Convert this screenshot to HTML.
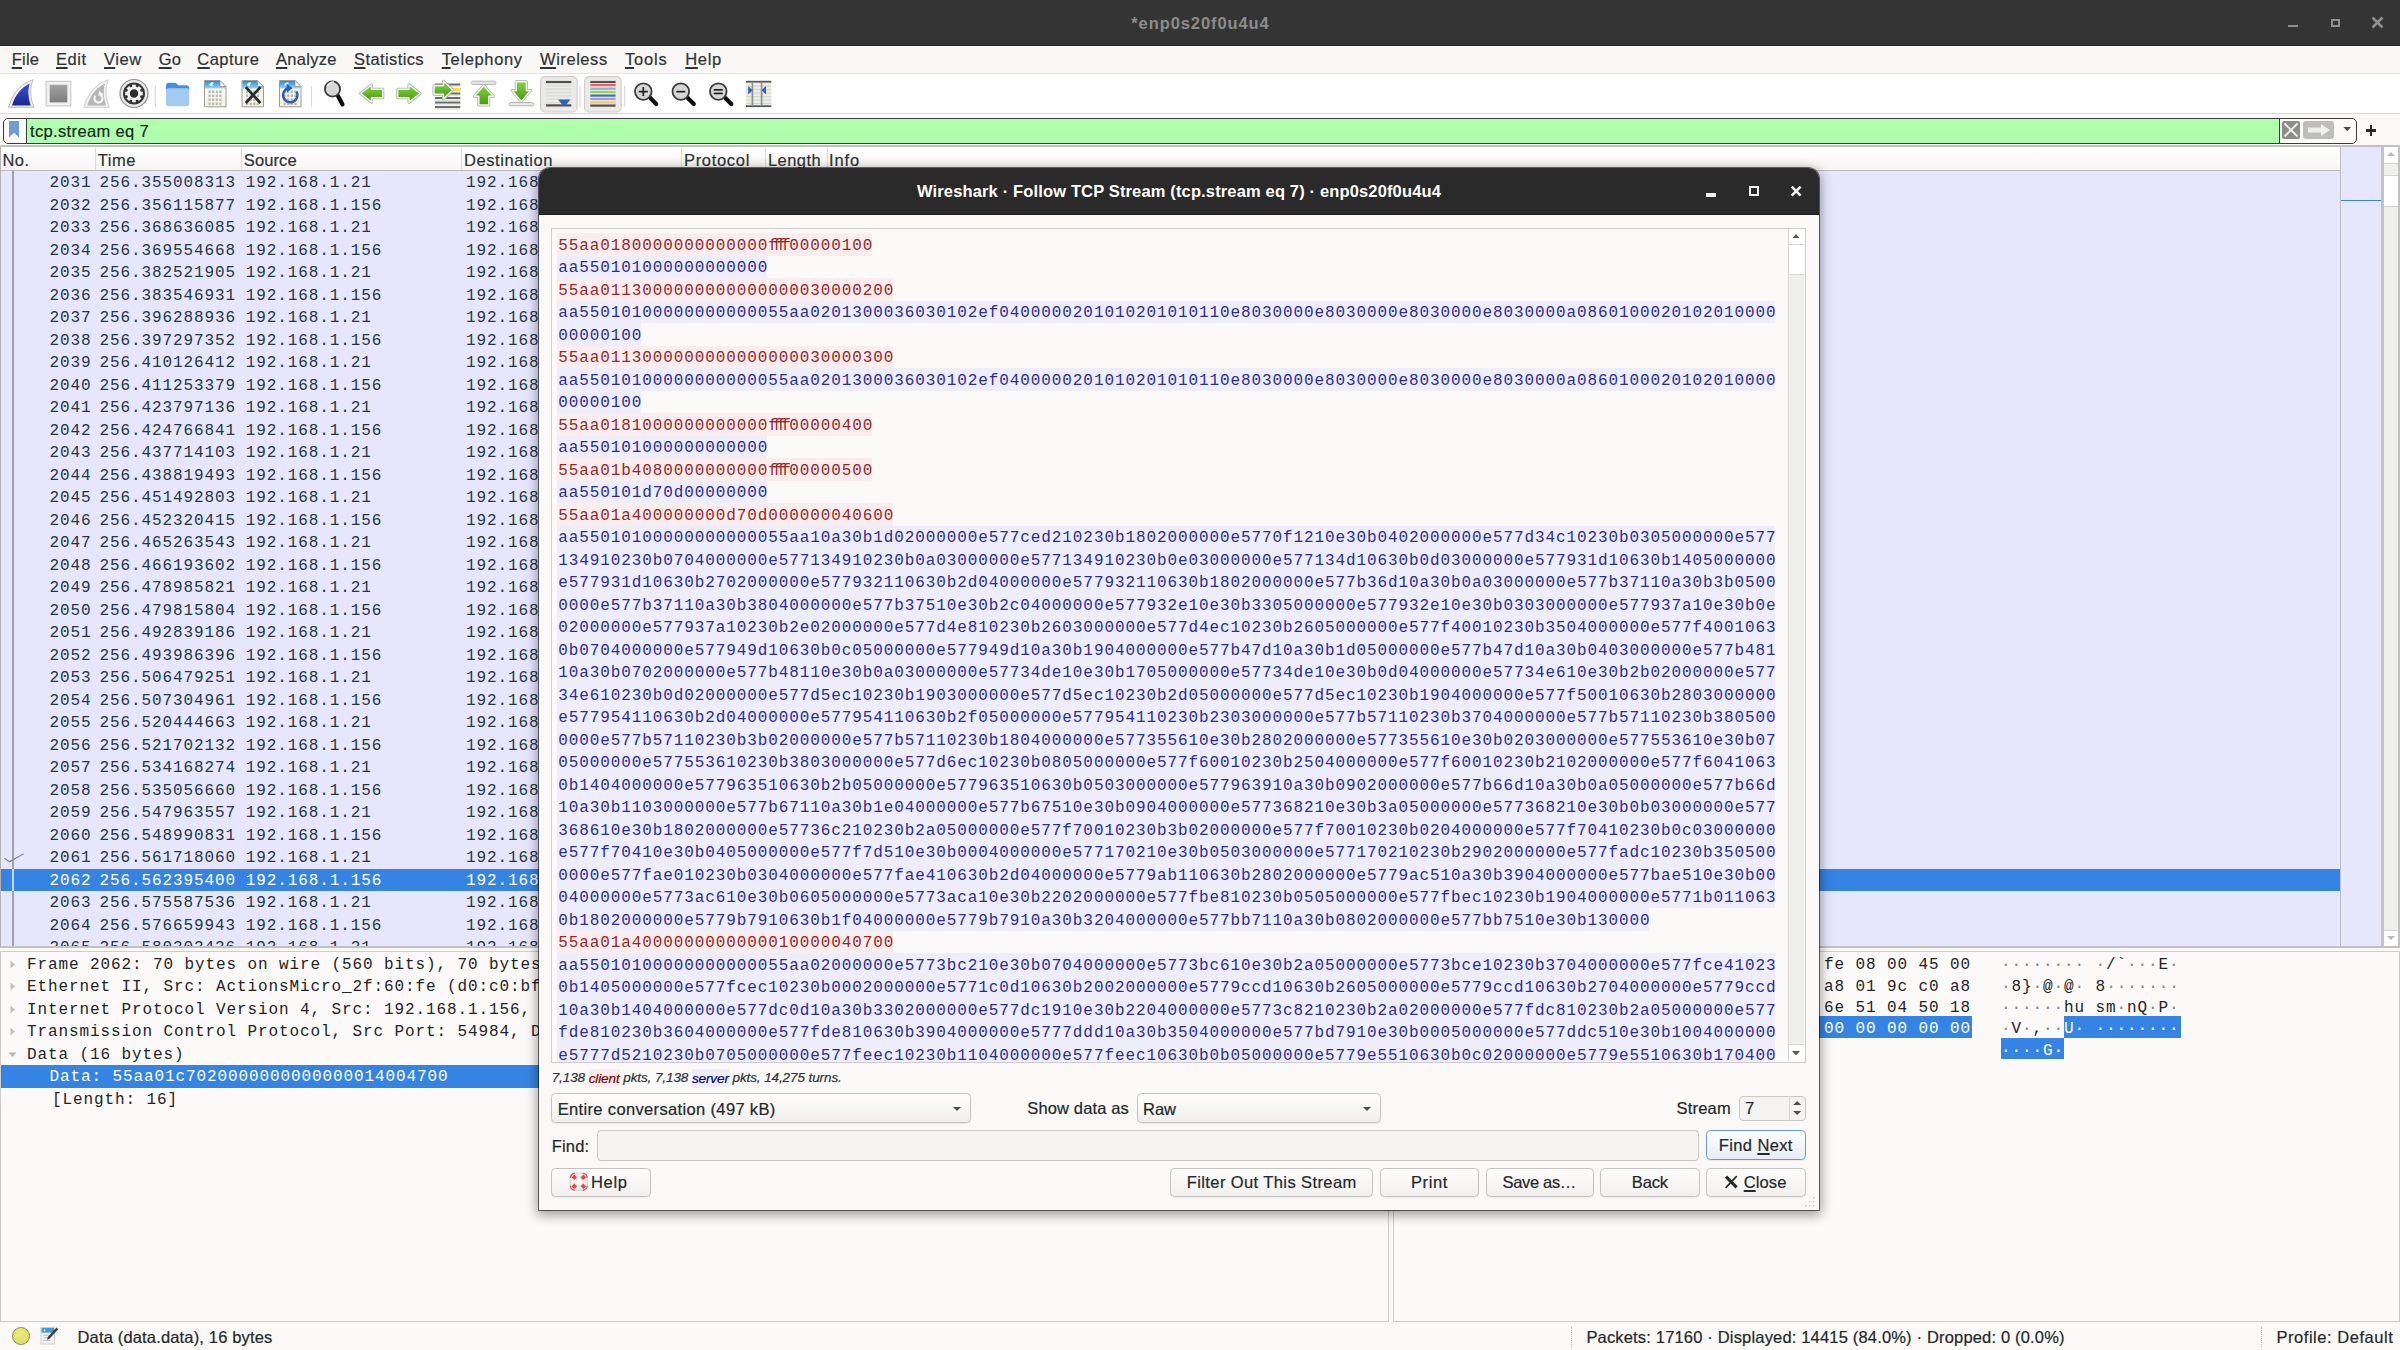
<!DOCTYPE html>
<html><head><meta charset="utf-8"><title>Wireshark</title>
<style>
html,body{margin:0;padding:0;}
body{width:2400px;height:1350px;overflow:hidden;position:relative;background:#faf9f8;font-family:"Liberation Sans","DejaVu Sans",sans-serif;color:#2e3436;}
div,span,svg{position:absolute;box-sizing:border-box;}
span{position:static;}
.t{white-space:pre;-webkit-text-stroke:0.22px currentColor;}
.m{font-family:"Liberation Mono","DejaVu Sans Mono",monospace;font-size:16px;letter-spacing:0.9px;white-space:pre;}
.m>div,.m>span{margin-top:1.7px;}
.hx>div{margin-top:3.1px;}
.d{color:#85888a;}
.row{left:0;height:22.5px;line-height:22.5px;}
.btn{border:1.2px solid #c6c2bd;border-radius:4.5px;background:linear-gradient(#fdfdfc,#f1f0ee);box-shadow:0 1px 1px rgba(0,0,0,0.06);}
.u{text-decoration:underline;text-underline-offset:2px;text-decoration-thickness:1.5px;}
.ff{letter-spacing:-5.3px;margin-right:3.8px;}
</style></head><body>

<div style="left:0;top:0;width:2400px;height:45.8px;background:#343434;border-bottom:1px solid #1e1e1e;"></div>
<div class="t" style="left:1131.3px;top:7.600000000000001px;height:30px;line-height:30px;font-family:'Liberation Sans', 'DejaVu Sans', sans-serif;font-size:16.5px;font-weight:bold;font-style:normal;letter-spacing:0.903px;color:#8d8c8a;-webkit-text-stroke:0;">*enp0s20f0u4u4</div>
<div style="left:2287.7px;top:24.5px;width:10px;height:2.5px;background:#909090;"></div>
<div style="left:2331px;top:18.8px;width:8.5px;height:8.5px;border:2.4px solid #909090;"></div>
<svg style="left:2371px;top:16px" width="13" height="13" viewBox="0 0 13 13"><path d="M1.5 1.5L11.5 11.5M11.5 1.5L1.5 11.5" stroke="#909090" stroke-width="2.6" fill="none"/></svg>
<div style="left:0;top:45.8px;width:2400px;height:27.9px;background:#f9f8f7;border-bottom:1.4px solid #e6e4e2;"></div>
<div class="t" style="left:11.7px;top:44.0px;height:30px;line-height:30px;font-family:'Liberation Sans', 'DejaVu Sans', sans-serif;font-size:16.5px;font-weight:normal;font-style:normal;letter-spacing:0.252px;color:#2e3436;"><span class="u">F</span>ile</div>
<div class="t" style="left:56px;top:44.0px;height:30px;line-height:30px;font-family:'Liberation Sans', 'DejaVu Sans', sans-serif;font-size:16.5px;font-weight:normal;font-style:normal;letter-spacing:0.566px;color:#2e3436;"><span class="u">E</span>dit</div>
<div class="t" style="left:104px;top:44.0px;height:30px;line-height:30px;font-family:'Liberation Sans', 'DejaVu Sans', sans-serif;font-size:16.5px;font-weight:normal;font-style:normal;letter-spacing:0.558px;color:#2e3436;"><span class="u">V</span>iew</div>
<div class="t" style="left:158.7px;top:44.0px;height:30px;line-height:30px;font-family:'Liberation Sans', 'DejaVu Sans', sans-serif;font-size:16.5px;font-weight:normal;font-style:normal;letter-spacing:0.142px;color:#2e3436;"><span class="u">G</span>o</div>
<div class="t" style="left:197.3px;top:44.0px;height:30px;line-height:30px;font-family:'Liberation Sans', 'DejaVu Sans', sans-serif;font-size:16.5px;font-weight:normal;font-style:normal;letter-spacing:0.471px;color:#2e3436;"><span class="u">C</span>apture</div>
<div class="t" style="left:276px;top:44.0px;height:30px;line-height:30px;font-family:'Liberation Sans', 'DejaVu Sans', sans-serif;font-size:16.5px;font-weight:normal;font-style:normal;letter-spacing:0.285px;color:#2e3436;"><span class="u">A</span>nalyze</div>
<div class="t" style="left:354px;top:44.0px;height:30px;line-height:30px;font-family:'Liberation Sans', 'DejaVu Sans', sans-serif;font-size:16.5px;font-weight:normal;font-style:normal;letter-spacing:0.397px;color:#2e3436;"><span class="u">S</span>tatistics</div>
<div class="t" style="left:441.7px;top:44.0px;height:30px;line-height:30px;font-family:'Liberation Sans', 'DejaVu Sans', sans-serif;font-size:16.5px;font-weight:normal;font-style:normal;letter-spacing:0.641px;color:#2e3436;"><span class="u">T</span>elephony</div>
<div class="t" style="left:540px;top:44.0px;height:30px;line-height:30px;font-family:'Liberation Sans', 'DejaVu Sans', sans-serif;font-size:16.5px;font-weight:normal;font-style:normal;letter-spacing:0.554px;color:#2e3436;"><span class="u">W</span>ireless</div>
<div class="t" style="left:625px;top:44.0px;height:30px;line-height:30px;font-family:'Liberation Sans', 'DejaVu Sans', sans-serif;font-size:16.5px;font-weight:normal;font-style:normal;letter-spacing:0.834px;color:#2e3436;"><span class="u">T</span>ools</div>
<div class="t" style="left:685.3px;top:44.0px;height:30px;line-height:30px;font-family:'Liberation Sans', 'DejaVu Sans', sans-serif;font-size:16.5px;font-weight:normal;font-style:normal;letter-spacing:0.616px;color:#2e3436;"><span class="u">H</span>elp</div>
<div style="left:0;top:74px;width:2400px;height:40px;background:#ffffff;border-bottom:1.5px solid #d9d7d4;"></div>
<svg style="left:0;top:74px" width="800" height="40" viewBox="0 0 800 40">
<defs>
<linearGradient id="gb" x1="0" y1="0" x2="0" y2="1"><stop offset="0" stop-color="#3d52cf"/><stop offset="1" stop-color="#1a2794"/></linearGradient>
<linearGradient id="gg" x1="0" y1="0" x2="0" y2="1"><stop offset="0" stop-color="#86d145"/><stop offset="1" stop-color="#489a0e"/></linearGradient>
<linearGradient id="gs" x1="0" y1="0" x2="0" y2="1"><stop offset="0" stop-color="#a3a3a3"/><stop offset="1" stop-color="#7c7c7c"/></linearGradient>
<linearGradient id="gp" x1="0" y1="0" x2="0" y2="1"><stop offset="0" stop-color="#ffffff"/><stop offset="1" stop-color="#f3f3dc"/></linearGradient>
<linearGradient id="gsk" x1="0" y1="0" x2="0" y2="1"><stop offset="0" stop-color="#1d8fe0"/><stop offset="1" stop-color="#9ed2f2"/></linearGradient>
</defs>
<rect x="154.70000000000002" y="12" width="1.2" height="21" fill="#dedcd9"/>
<rect x="310.9" y="12" width="1.2" height="21" fill="#dedcd9"/>
<rect x="579.4" y="12" width="1.2" height="21" fill="#dedcd9"/>
<rect x="624.1" y="12" width="1.2" height="21" fill="#dedcd9"/>
<path d="M8.5,33.3 C12,21 20,9.5 33,5.8 C29.5,14 30,24 34,33.3 Z" fill="#f1f1f1" stroke="#b9b9b9" stroke-width="1"/>
<path d="M12,31.6 C15,21.5 21,13.5 29.8,9.6 C27.5,16 28.3,24 30.8,31.6 Z" fill="url(#gb)"/>
<rect x="46.2" y="7.3" width="24.6" height="24.6" fill="#f2f2f2" stroke="#c4c4c4" stroke-width="1"/>
<rect x="49.7" y="10.8" width="17.6" height="17.6" fill="url(#gs)"/>
<path d="M83.8,33.3 C87.3,21 95.3,9.5 108.3,5.8 C104.8,14 105.3,24 109.3,33.3 Z" fill="#f1f1f1" stroke="#cfcfcf" stroke-width="1"/>
<path d="M87.3,31.6 C90.3,21.5 96.3,13.5 105.1,9.6 C102.8,16 103.6,24 106.1,31.6 Z" fill="#b7b7b7"/>
<circle cx="98.5" cy="24.5" r="4" fill="none" stroke="#f4f4f4" stroke-width="2.2" stroke-dasharray="19 7" transform="rotate(-60 98.5 24.5)"/>
<path d="M99.5,16.5 L103.8,20.8 L98,21.8 Z" fill="#f4f4f4"/>
<circle cx="134" cy="19.5" r="14" fill="#e9e9e9" stroke="#8f8f8f" stroke-width="1.2"/>
<circle cx="134" cy="19.5" r="11" fill="#353535"/>
<rect x="132.2" y="10.7" width="3.6" height="4" fill="#f2f2f2" transform="rotate(0 134 19.5)"/>
<rect x="132.2" y="10.7" width="3.6" height="4" fill="#f2f2f2" transform="rotate(45 134 19.5)"/>
<rect x="132.2" y="10.7" width="3.6" height="4" fill="#f2f2f2" transform="rotate(90 134 19.5)"/>
<rect x="132.2" y="10.7" width="3.6" height="4" fill="#f2f2f2" transform="rotate(135 134 19.5)"/>
<rect x="132.2" y="10.7" width="3.6" height="4" fill="#f2f2f2" transform="rotate(180 134 19.5)"/>
<rect x="132.2" y="10.7" width="3.6" height="4" fill="#f2f2f2" transform="rotate(225 134 19.5)"/>
<rect x="132.2" y="10.7" width="3.6" height="4" fill="#f2f2f2" transform="rotate(270 134 19.5)"/>
<rect x="132.2" y="10.7" width="3.6" height="4" fill="#f2f2f2" transform="rotate(315 134 19.5)"/>
<circle cx="134" cy="19.5" r="5.6" fill="none" stroke="#f2f2f2" stroke-width="2.6"/>
<circle cx="134" cy="19.5" r="3.6" fill="#2c2c2c"/>
<path d="M166,16 V12 q0,-3.2 3,-3.2 h5.5 q1.5,0 2.5,1.2 l1.2,1.3 h8 q3,0 3,3 V16 Z" fill="#438de6"/>
<rect x="166" y="14.2" width="23.3" height="18" rx="2.6" fill="#a4caee"/>
<path d="M204.5,6.5 H220 L226,12.5 V32.8 H204.5 Z" fill="url(#gp)" stroke="#9b9b9b" stroke-width="1"/>
<path d="M205,7 H219.8 L225.5,12.7 V14.5 H205 Z" fill="url(#gsk)"/>
<path d="M220,6.5 V12.5 H226 Z" fill="#f4f4f4" stroke="#9b9b9b" stroke-width="0.8"/>
<path d="M209,11 q2,-4 5,-2 q-2,1 -1.5,3.5 q-2,-1 -3.5,-1.5z" fill="#ffffff" opacity="0.9"/>
<rect x="208.5" y="16.5" width="2.2" height="2.6" fill="#b9b9b4"/>
<rect x="212.1" y="16.5" width="2.2" height="2.6" fill="#b9b9b4"/>
<rect x="215.7" y="16.5" width="2.2" height="2.6" fill="#b9b9b4"/>
<rect x="219.3" y="16.5" width="2.2" height="2.6" fill="#b9b9b4"/>
<rect x="208.5" y="20.5" width="2.2" height="2.6" fill="#b9b9b4"/>
<rect x="212.1" y="20.5" width="2.2" height="2.6" fill="#b9b9b4"/>
<rect x="215.7" y="20.5" width="2.2" height="2.6" fill="#b9b9b4"/>
<rect x="219.3" y="20.5" width="2.2" height="2.6" fill="#b9b9b4"/>
<rect x="208.5" y="24.5" width="2.2" height="2.6" fill="#b9b9b4"/>
<rect x="212.1" y="24.5" width="2.2" height="2.6" fill="#b9b9b4"/>
<rect x="215.7" y="24.5" width="2.2" height="2.6" fill="#b9b9b4"/>
<rect x="219.3" y="24.5" width="2.2" height="2.6" fill="#b9b9b4"/>
<rect x="208.5" y="28.5" width="2.2" height="2.6" fill="#b9b9b4"/>
<rect x="212.1" y="28.5" width="2.2" height="2.6" fill="#b9b9b4"/>
<rect x="215.7" y="28.5" width="2.2" height="2.6" fill="#b9b9b4"/>
<rect x="219.3" y="28.5" width="2.2" height="2.6" fill="#b9b9b4"/>
<path d="M242.0,6.5 H257.5 L263.5,12.5 V32.8 H242.0 Z" fill="url(#gp)" stroke="#9b9b9b" stroke-width="1"/>
<path d="M242.5,7 H257.3 L263.0,12.7 V14.5 H242.5 Z" fill="url(#gsk)"/>
<path d="M257.5,6.5 V12.5 H263.5 Z" fill="#f4f4f4" stroke="#9b9b9b" stroke-width="0.8"/>
<path d="M246.5,11 q2,-4 5,-2 q-2,1 -1.5,3.5 q-2,-1 -3.5,-1.5z" fill="#ffffff" opacity="0.9"/>
<rect x="246.0" y="16.5" width="2.2" height="2.6" fill="#b9b9b4"/>
<rect x="249.6" y="16.5" width="2.2" height="2.6" fill="#b9b9b4"/>
<rect x="253.2" y="16.5" width="2.2" height="2.6" fill="#b9b9b4"/>
<rect x="256.8" y="16.5" width="2.2" height="2.6" fill="#b9b9b4"/>
<rect x="246.0" y="20.5" width="2.2" height="2.6" fill="#b9b9b4"/>
<rect x="249.6" y="20.5" width="2.2" height="2.6" fill="#b9b9b4"/>
<rect x="253.2" y="20.5" width="2.2" height="2.6" fill="#b9b9b4"/>
<rect x="256.8" y="20.5" width="2.2" height="2.6" fill="#b9b9b4"/>
<rect x="246.0" y="24.5" width="2.2" height="2.6" fill="#b9b9b4"/>
<rect x="249.6" y="24.5" width="2.2" height="2.6" fill="#b9b9b4"/>
<rect x="253.2" y="24.5" width="2.2" height="2.6" fill="#b9b9b4"/>
<rect x="256.8" y="24.5" width="2.2" height="2.6" fill="#b9b9b4"/>
<rect x="246.0" y="28.5" width="2.2" height="2.6" fill="#b9b9b4"/>
<rect x="249.6" y="28.5" width="2.2" height="2.6" fill="#b9b9b4"/>
<rect x="253.2" y="28.5" width="2.2" height="2.6" fill="#b9b9b4"/>
<rect x="256.8" y="28.5" width="2.2" height="2.6" fill="#b9b9b4"/>
<path d="M245.8,13.2 L260.4,29 M260.4,13.2 L245.8,29" stroke="#2b2b2b" stroke-width="2.7" fill="none"/>
<path d="M279.5,6.5 H295 L301,12.5 V32.8 H279.5 Z" fill="url(#gp)" stroke="#9b9b9b" stroke-width="1"/>
<path d="M280,7 H294.8 L300.5,12.7 V14.5 H280 Z" fill="url(#gsk)"/>
<path d="M295,6.5 V12.5 H301 Z" fill="#f4f4f4" stroke="#9b9b9b" stroke-width="0.8"/>
<path d="M284,11 q2,-4 5,-2 q-2,1 -1.5,3.5 q-2,-1 -3.5,-1.5z" fill="#ffffff" opacity="0.9"/>
<rect x="283.5" y="16.5" width="2.2" height="2.6" fill="#b9b9b4"/>
<rect x="287.1" y="16.5" width="2.2" height="2.6" fill="#b9b9b4"/>
<rect x="290.7" y="16.5" width="2.2" height="2.6" fill="#b9b9b4"/>
<rect x="294.3" y="16.5" width="2.2" height="2.6" fill="#b9b9b4"/>
<rect x="283.5" y="20.5" width="2.2" height="2.6" fill="#b9b9b4"/>
<rect x="287.1" y="20.5" width="2.2" height="2.6" fill="#b9b9b4"/>
<rect x="290.7" y="20.5" width="2.2" height="2.6" fill="#b9b9b4"/>
<rect x="294.3" y="20.5" width="2.2" height="2.6" fill="#b9b9b4"/>
<rect x="283.5" y="24.5" width="2.2" height="2.6" fill="#b9b9b4"/>
<rect x="287.1" y="24.5" width="2.2" height="2.6" fill="#b9b9b4"/>
<rect x="290.7" y="24.5" width="2.2" height="2.6" fill="#b9b9b4"/>
<rect x="294.3" y="24.5" width="2.2" height="2.6" fill="#b9b9b4"/>
<rect x="283.5" y="28.5" width="2.2" height="2.6" fill="#b9b9b4"/>
<rect x="287.1" y="28.5" width="2.2" height="2.6" fill="#b9b9b4"/>
<rect x="290.7" y="28.5" width="2.2" height="2.6" fill="#b9b9b4"/>
<rect x="294.3" y="28.5" width="2.2" height="2.6" fill="#b9b9b4"/>
<path d="M296.5,17.5 A7.2,7.2 0 1 1 289,14" stroke="#2f5fae" stroke-width="2.6" fill="none"/>
<path d="M286.5,9.5 L292.5,14.2 L286.8,18.5 Z" fill="#2f5fae"/>
<path d="M338,22 L342.5,30.5" stroke="#0d0d0d" stroke-width="4.2" stroke-linecap="round"/>
<circle cx="332.5" cy="15" r="7.6" fill="#d6d6d6" stroke="#3a3a3a" stroke-width="1.8"/>
<path d="M327,12.5 q2,-4.5 7,-4.5" stroke="#ffffff" stroke-width="1.4" fill="none" opacity="0.9"/>
<path d="M360.6,19.5 L371.5,10.8 V15.2 H382.8 V23.8 H371.5 V28.2 Z" fill="none" stroke="#aeaeae" stroke-width="3" stroke-linejoin="round"/>
<path d="M360.6,19.5 L371.5,10.8 V15.2 H382.8 V23.8 H371.5 V28.2 Z" fill="url(#gg)" stroke="#eef3ea" stroke-width="1.5" stroke-linejoin="round"/>
<path d="M420,19.5 L409,10.8 V15.2 H397.7 V23.8 H409 V28.2 Z" fill="none" stroke="#aeaeae" stroke-width="3" stroke-linejoin="round"/>
<path d="M420,19.5 L409,10.8 V15.2 H397.7 V23.8 H409 V28.2 Z" fill="url(#gg)" stroke="#eef3ea" stroke-width="1.5" stroke-linejoin="round"/>
<rect x="435" y="9.5" width="25.3" height="2.2" fill="#6a6d6a"/>
<rect x="435" y="11.7" width="25.3" height="1.6" fill="#e6e7e4"/>
<rect x="435" y="14" width="25.3" height="2.2" fill="#6a6d6a"/>
<rect x="435" y="16.2" width="25.3" height="1.6" fill="#e6e7e4"/>
<rect x="435" y="18.5" width="25.3" height="2.2" fill="#6a6d6a"/>
<rect x="435" y="20.7" width="25.3" height="1.6" fill="#e6e7e4"/>
<rect x="435" y="23" width="25.3" height="2.2" fill="#6a6d6a"/>
<rect x="435" y="25.2" width="25.3" height="1.6" fill="#e6e7e4"/>
<rect x="435" y="27.5" width="25.3" height="2.2" fill="#6a6d6a"/>
<rect x="435" y="29.7" width="25.3" height="1.6" fill="#e6e7e4"/>
<rect x="435" y="32" width="25.3" height="2.2" fill="#6a6d6a"/>
<rect x="435" y="34.2" width="25.3" height="1.6" fill="#e6e7e4"/>
<rect x="451" y="14" width="9.3" height="3.2" fill="#f5e04a"/>
<path d="M452.8,16 L443.5,7.2 V11.8 H434 V20.2 H443.5 V24.8 Z" fill="none" stroke="#aeaeae" stroke-width="3" stroke-linejoin="round"/>
<path d="M452.8,16 L443.5,7.2 V11.8 H434 V20.2 H443.5 V24.8 Z" fill="url(#gg)" stroke="#eef3ea" stroke-width="1.5" stroke-linejoin="round"/>
<rect x="471.5" y="7.2" width="24.4" height="3.2" rx="1.3" fill="#e8e8e8" stroke="#ababab" stroke-width="0.9"/>
<path d="M483.8,11.6 L493.2,22.2 H488.8 V31 H478.8 V22.2 H474.4 Z" fill="none" stroke="#aeaeae" stroke-width="3" stroke-linejoin="round"/>
<path d="M483.8,11.6 L493.2,22.2 H488.8 V31 H478.8 V22.2 H474.4 Z" fill="url(#gg)" stroke="#eef3ea" stroke-width="1.5" stroke-linejoin="round"/>
<rect x="509.3" y="28.6" width="24.4" height="3.2" rx="1.3" fill="#e8e8e8" stroke="#ababab" stroke-width="0.9"/>
<path d="M521.3,27.4 L530.6,16.4 H526.4 V7.8 H516.2 V16.4 H512 Z" fill="none" stroke="#aeaeae" stroke-width="3" stroke-linejoin="round"/>
<path d="M521.3,27.4 L530.6,16.4 H526.4 V7.8 H516.2 V16.4 H512 Z" fill="url(#gg)" stroke="#eef3ea" stroke-width="1.5" stroke-linejoin="round"/>
<rect x="540.6" y="2.6" width="36.5" height="35.4" rx="4.5" fill="#eceae8" stroke="#cfccc8" stroke-width="1.1"/>
<rect x="546" y="6.9" width="25.3" height="2.2" fill="#4e5152"/>
<rect x="546" y="10.8" width="25.3" height="1.7" fill="#dcdfd9"/>
<rect x="546" y="14.2" width="25.3" height="1.7" fill="#dcdfd9"/>
<rect x="546" y="17.6" width="25.3" height="1.7" fill="#dcdfd9"/>
<rect x="546" y="21" width="25.3" height="1.7" fill="#dcdfd9"/>
<rect x="546" y="24.4" width="25.3" height="1.7" fill="#dcdfd9"/>
<rect x="546" y="27.8" width="25.3" height="1.7" fill="#dcdfd9"/>
<rect x="546" y="30.3" width="25.3" height="2.2" fill="#4e5152"/>
<path d="M558,25.4 H570.4 L565.8,31.2 H562.6 Z" fill="#2f63b8"/>
<rect x="584.6" y="2.6" width="36.5" height="35.4" rx="4.5" fill="#eceae8" stroke="#cfccc8" stroke-width="1.1"/>
<rect x="590.3" y="6.9" width="25.3" height="2.2" fill="#4e5152"/>
<rect x="590.3" y="10" width="25.3" height="2.2" fill="#ef5d5d"/>
<rect x="590.3" y="13.6" width="25.3" height="2.2" fill="#8bafe2"/>
<rect x="590.3" y="16.9" width="25.3" height="2.2" fill="#8fdd44"/>
<rect x="590.3" y="20.5" width="25.3" height="2.2" fill="#3b70c2"/>
<rect x="590.3" y="23.9" width="25.3" height="2.2" fill="#b59bc2"/>
<rect x="590.3" y="27.3" width="25.3" height="2.2" fill="#e6cd69"/>
<rect x="590.3" y="30.5" width="25.3" height="2.2" fill="#4e5152"/>
<path d="M650.3,24 L656.3,30" stroke="#0d0d0d" stroke-width="4.2" stroke-linecap="round"/>
<circle cx="643.3" cy="17.6" r="8.3" fill="#d6d6d6" stroke="#3a3a3a" stroke-width="1.8"/>
<rect x="638.8" y="16.8" width="9" height="1.7" fill="#222"/>
<rect x="642.4499999999999" y="13.1" width="1.7" height="9" fill="#222"/>
<path d="M687.8,24 L693.8,30" stroke="#0d0d0d" stroke-width="4.2" stroke-linecap="round"/>
<circle cx="680.8" cy="17.6" r="8.3" fill="#d6d6d6" stroke="#3a3a3a" stroke-width="1.8"/>
<rect x="676.3" y="16.8" width="9" height="1.7" fill="#222"/>
<path d="M725.3,24 L731.3,30" stroke="#0d0d0d" stroke-width="4.2" stroke-linecap="round"/>
<circle cx="718.3" cy="17.6" r="8.3" fill="#d6d6d6" stroke="#3a3a3a" stroke-width="1.8"/>
<rect x="713.8" y="15" width="9" height="1.7" fill="#222"/><rect x="713.8" y="18.6" width="9" height="1.7" fill="#222"/>
<rect x="746" y="7.6" width="25.3" height="24.4" fill="#ecede9"/>
<rect x="746" y="11.5" width="25.3" height="1.1" fill="#d3d5cf"/>
<rect x="746" y="15" width="25.3" height="1.1" fill="#d3d5cf"/>
<rect x="746" y="18.5" width="25.3" height="1.1" fill="#d3d5cf"/>
<rect x="746" y="22" width="25.3" height="1.1" fill="#d3d5cf"/>
<rect x="746" y="25.5" width="25.3" height="1.1" fill="#d3d5cf"/>
<rect x="746" y="29" width="25.3" height="1.1" fill="#d3d5cf"/>
<rect x="746" y="6.8" width="25.3" height="1.8" fill="#55585a"/><rect x="746" y="31.3" width="25.3" height="1.8" fill="#55585a"/>
<rect x="751.6" y="8" width="1.6" height="24" fill="#8d8f8c"/><rect x="760.8" y="8" width="1.6" height="24" fill="#8d8f8c"/>
<path d="M748.2,12 L752.6,16.2 L748.2,20.4 Z" fill="#2f63b8"/><path d="M766,12 L761.6,16.2 L766,20.4 Z" fill="#2f63b8"/>
</svg>
<div style="left:0;top:115px;width:2400px;height:32px;background:#faf9f8;"></div>
<div style="left:3px;top:117.8px;width:2354px;height:26.2px;border:1.5px solid #3c3c3c;border-radius:5px;background:#fbfaf9;overflow:hidden;"><div style="left:22px;top:0;width:2254px;height:26px;background:#afffaf;border-left:1.5px solid #3c3c3c;border-right:1.5px solid #3c3c3c;"></div></div>
<svg style="left:8.8px;top:121.3px" width="10" height="17.5" viewBox="0 0 11 18" preserveAspectRatio="none"><path d="M0 0H11V17L5.5 12L0 17Z" fill="#6e9fd2"/></svg>
<div class="t" style="left:30px;top:116.0px;height:30px;line-height:30px;font-family:'Liberation Sans', 'DejaVu Sans', sans-serif;font-size:16.5px;font-weight:normal;font-style:normal;letter-spacing:0.351px;color:#1c2a1c;">tcp.stream eq 7</div>
<div style="left:2282px;top:121px;width:18px;height:18px;background:#8b8e8a;border-radius:2px;"></div>
<svg style="left:2282px;top:121px" width="18" height="18" viewBox="0 0 18 18"><path d="M2.5 2.5L15.5 15.5M15.5 2.5L2.5 15.5" stroke="#f2f2f0" stroke-width="1.8" fill="none"/></svg>
<div style="left:2303px;top:121px;width:31px;height:18px;background:#bdbdbb;border-radius:3px;"></div>
<svg style="left:2303px;top:121px" width="31" height="18" viewBox="0 0 31 18"><path d="M5 6.5H18V3L27 9L18 15V11.5H5Z" fill="#efefee"/></svg>
<svg style="left:2343px;top:127.3px" width="8.4" height="4.6" viewBox="0 0 10 6"><path d="M0 0H10L5 5.5Z" fill="#4a4a4a"/></svg>
<div style="left:2366px;top:129.2px;width:10.4px;height:2.4px;background:#2a2a2a;"></div><div style="left:2370px;top:125.2px;width:2.4px;height:10.4px;background:#2a2a2a;"></div>
<div style="left:0;top:146px;width:2400px;height:801px;background:#faf9f8;"></div>
<div style="left:1px;top:147px;width:2339px;height:24px;background:linear-gradient(#ffffff,#f6f5f3);border-bottom:1.3px solid #bdbcba;"></div>
<div style="left:95px;top:148px;width:1px;height:22px;background:#dddbd8;"></div>
<div style="left:241px;top:148px;width:1px;height:22px;background:#dddbd8;"></div>
<div style="left:461px;top:148px;width:1px;height:22px;background:#dddbd8;"></div>
<div style="left:681px;top:148px;width:1px;height:22px;background:#dddbd8;"></div>
<div style="left:765px;top:148px;width:1px;height:22px;background:#dddbd8;"></div>
<div style="left:827px;top:148px;width:1px;height:22px;background:#dddbd8;"></div>
<div class="t" style="left:2.5px;top:145.0px;height:30px;line-height:30px;font-family:'Liberation Sans', 'DejaVu Sans', sans-serif;font-size:16.5px;font-weight:normal;font-style:normal;letter-spacing:0.438px;color:#2e3436;">No.</div>
<div class="t" style="left:97.7px;top:145.0px;height:30px;line-height:30px;font-family:'Liberation Sans', 'DejaVu Sans', sans-serif;font-size:16.5px;font-weight:normal;font-style:normal;letter-spacing:0.559px;color:#2e3436;">Time</div>
<div class="t" style="left:243.8px;top:145.0px;height:30px;line-height:30px;font-family:'Liberation Sans', 'DejaVu Sans', sans-serif;font-size:16.5px;font-weight:normal;font-style:normal;letter-spacing:0.103px;color:#2e3436;">Source</div>
<div class="t" style="left:464px;top:145.0px;height:30px;line-height:30px;font-family:'Liberation Sans', 'DejaVu Sans', sans-serif;font-size:16.5px;font-weight:normal;font-style:normal;letter-spacing:0.585px;color:#2e3436;">Destination</div>
<div class="t" style="left:684px;top:145.0px;height:30px;line-height:30px;font-family:'Liberation Sans', 'DejaVu Sans', sans-serif;font-size:16.5px;font-weight:normal;font-style:normal;letter-spacing:0.684px;color:#2e3436;">Protocol</div>
<div class="t" style="left:768px;top:145.0px;height:30px;line-height:30px;font-family:'Liberation Sans', 'DejaVu Sans', sans-serif;font-size:16.5px;font-weight:normal;font-style:normal;letter-spacing:0.422px;color:#2e3436;">Length</div>
<div class="t" style="left:829px;top:145.0px;height:30px;line-height:30px;font-family:'Liberation Sans', 'DejaVu Sans', sans-serif;font-size:16.5px;font-weight:normal;font-style:normal;letter-spacing:0.867px;color:#2e3436;">Info</div>
<div style="left:1px;top:171px;width:2339px;height:775.5px;background:#e7e6ff;overflow:hidden;">
<div class="row m" style="top:0.2px;width:2339px;color:#24383f;"><div style="left:48.5px;top:-0.5px">2031</div><div style="left:98.5px;top:-0.5px">256.355008313</div><div style="left:244.8px;top:-0.5px">192.168.1.21</div><div style="left:464.9px;top:-0.5px">192.168.1.156</div></div>
<div class="row m" style="top:22.7px;width:2339px;color:#24383f;"><div style="left:48.5px;top:-0.5px">2032</div><div style="left:98.5px;top:-0.5px">256.356115877</div><div style="left:244.8px;top:-0.5px">192.168.1.156</div><div style="left:464.9px;top:-0.5px">192.168.1.21</div></div>
<div class="row m" style="top:45.2px;width:2339px;color:#24383f;"><div style="left:48.5px;top:-0.5px">2033</div><div style="left:98.5px;top:-0.5px">256.368636085</div><div style="left:244.8px;top:-0.5px">192.168.1.21</div><div style="left:464.9px;top:-0.5px">192.168.1.156</div></div>
<div class="row m" style="top:67.7px;width:2339px;color:#24383f;"><div style="left:48.5px;top:-0.5px">2034</div><div style="left:98.5px;top:-0.5px">256.369554668</div><div style="left:244.8px;top:-0.5px">192.168.1.156</div><div style="left:464.9px;top:-0.5px">192.168.1.21</div></div>
<div class="row m" style="top:90.2px;width:2339px;color:#24383f;"><div style="left:48.5px;top:-0.5px">2035</div><div style="left:98.5px;top:-0.5px">256.382521905</div><div style="left:244.8px;top:-0.5px">192.168.1.21</div><div style="left:464.9px;top:-0.5px">192.168.1.156</div></div>
<div class="row m" style="top:112.7px;width:2339px;color:#24383f;"><div style="left:48.5px;top:-0.5px">2036</div><div style="left:98.5px;top:-0.5px">256.383546931</div><div style="left:244.8px;top:-0.5px">192.168.1.156</div><div style="left:464.9px;top:-0.5px">192.168.1.21</div></div>
<div class="row m" style="top:135.2px;width:2339px;color:#24383f;"><div style="left:48.5px;top:-0.5px">2037</div><div style="left:98.5px;top:-0.5px">256.396288936</div><div style="left:244.8px;top:-0.5px">192.168.1.21</div><div style="left:464.9px;top:-0.5px">192.168.1.156</div></div>
<div class="row m" style="top:157.7px;width:2339px;color:#24383f;"><div style="left:48.5px;top:-0.5px">2038</div><div style="left:98.5px;top:-0.5px">256.397297352</div><div style="left:244.8px;top:-0.5px">192.168.1.156</div><div style="left:464.9px;top:-0.5px">192.168.1.21</div></div>
<div class="row m" style="top:180.2px;width:2339px;color:#24383f;"><div style="left:48.5px;top:-0.5px">2039</div><div style="left:98.5px;top:-0.5px">256.410126412</div><div style="left:244.8px;top:-0.5px">192.168.1.21</div><div style="left:464.9px;top:-0.5px">192.168.1.156</div></div>
<div class="row m" style="top:202.7px;width:2339px;color:#24383f;"><div style="left:48.5px;top:-0.5px">2040</div><div style="left:98.5px;top:-0.5px">256.411253379</div><div style="left:244.8px;top:-0.5px">192.168.1.156</div><div style="left:464.9px;top:-0.5px">192.168.1.21</div></div>
<div class="row m" style="top:225.2px;width:2339px;color:#24383f;"><div style="left:48.5px;top:-0.5px">2041</div><div style="left:98.5px;top:-0.5px">256.423797136</div><div style="left:244.8px;top:-0.5px">192.168.1.21</div><div style="left:464.9px;top:-0.5px">192.168.1.156</div></div>
<div class="row m" style="top:247.7px;width:2339px;color:#24383f;"><div style="left:48.5px;top:-0.5px">2042</div><div style="left:98.5px;top:-0.5px">256.424766841</div><div style="left:244.8px;top:-0.5px">192.168.1.156</div><div style="left:464.9px;top:-0.5px">192.168.1.21</div></div>
<div class="row m" style="top:270.2px;width:2339px;color:#24383f;"><div style="left:48.5px;top:-0.5px">2043</div><div style="left:98.5px;top:-0.5px">256.437714103</div><div style="left:244.8px;top:-0.5px">192.168.1.21</div><div style="left:464.9px;top:-0.5px">192.168.1.156</div></div>
<div class="row m" style="top:292.7px;width:2339px;color:#24383f;"><div style="left:48.5px;top:-0.5px">2044</div><div style="left:98.5px;top:-0.5px">256.438819493</div><div style="left:244.8px;top:-0.5px">192.168.1.156</div><div style="left:464.9px;top:-0.5px">192.168.1.21</div></div>
<div class="row m" style="top:315.2px;width:2339px;color:#24383f;"><div style="left:48.5px;top:-0.5px">2045</div><div style="left:98.5px;top:-0.5px">256.451492803</div><div style="left:244.8px;top:-0.5px">192.168.1.21</div><div style="left:464.9px;top:-0.5px">192.168.1.156</div></div>
<div class="row m" style="top:337.7px;width:2339px;color:#24383f;"><div style="left:48.5px;top:-0.5px">2046</div><div style="left:98.5px;top:-0.5px">256.452320415</div><div style="left:244.8px;top:-0.5px">192.168.1.156</div><div style="left:464.9px;top:-0.5px">192.168.1.21</div></div>
<div class="row m" style="top:360.2px;width:2339px;color:#24383f;"><div style="left:48.5px;top:-0.5px">2047</div><div style="left:98.5px;top:-0.5px">256.465263543</div><div style="left:244.8px;top:-0.5px">192.168.1.21</div><div style="left:464.9px;top:-0.5px">192.168.1.156</div></div>
<div class="row m" style="top:382.7px;width:2339px;color:#24383f;"><div style="left:48.5px;top:-0.5px">2048</div><div style="left:98.5px;top:-0.5px">256.466193602</div><div style="left:244.8px;top:-0.5px">192.168.1.156</div><div style="left:464.9px;top:-0.5px">192.168.1.21</div></div>
<div class="row m" style="top:405.2px;width:2339px;color:#24383f;"><div style="left:48.5px;top:-0.5px">2049</div><div style="left:98.5px;top:-0.5px">256.478985821</div><div style="left:244.8px;top:-0.5px">192.168.1.21</div><div style="left:464.9px;top:-0.5px">192.168.1.156</div></div>
<div class="row m" style="top:427.7px;width:2339px;color:#24383f;"><div style="left:48.5px;top:-0.5px">2050</div><div style="left:98.5px;top:-0.5px">256.479815804</div><div style="left:244.8px;top:-0.5px">192.168.1.156</div><div style="left:464.9px;top:-0.5px">192.168.1.21</div></div>
<div class="row m" style="top:450.2px;width:2339px;color:#24383f;"><div style="left:48.5px;top:-0.5px">2051</div><div style="left:98.5px;top:-0.5px">256.492839186</div><div style="left:244.8px;top:-0.5px">192.168.1.21</div><div style="left:464.9px;top:-0.5px">192.168.1.156</div></div>
<div class="row m" style="top:472.7px;width:2339px;color:#24383f;"><div style="left:48.5px;top:-0.5px">2052</div><div style="left:98.5px;top:-0.5px">256.493986396</div><div style="left:244.8px;top:-0.5px">192.168.1.156</div><div style="left:464.9px;top:-0.5px">192.168.1.21</div></div>
<div class="row m" style="top:495.2px;width:2339px;color:#24383f;"><div style="left:48.5px;top:-0.5px">2053</div><div style="left:98.5px;top:-0.5px">256.506479251</div><div style="left:244.8px;top:-0.5px">192.168.1.21</div><div style="left:464.9px;top:-0.5px">192.168.1.156</div></div>
<div class="row m" style="top:517.7px;width:2339px;color:#24383f;"><div style="left:48.5px;top:-0.5px">2054</div><div style="left:98.5px;top:-0.5px">256.507304961</div><div style="left:244.8px;top:-0.5px">192.168.1.156</div><div style="left:464.9px;top:-0.5px">192.168.1.21</div></div>
<div class="row m" style="top:540.2px;width:2339px;color:#24383f;"><div style="left:48.5px;top:-0.5px">2055</div><div style="left:98.5px;top:-0.5px">256.520444663</div><div style="left:244.8px;top:-0.5px">192.168.1.21</div><div style="left:464.9px;top:-0.5px">192.168.1.156</div></div>
<div class="row m" style="top:562.7px;width:2339px;color:#24383f;"><div style="left:48.5px;top:-0.5px">2056</div><div style="left:98.5px;top:-0.5px">256.521702132</div><div style="left:244.8px;top:-0.5px">192.168.1.156</div><div style="left:464.9px;top:-0.5px">192.168.1.21</div></div>
<div class="row m" style="top:585.2px;width:2339px;color:#24383f;"><div style="left:48.5px;top:-0.5px">2057</div><div style="left:98.5px;top:-0.5px">256.534168274</div><div style="left:244.8px;top:-0.5px">192.168.1.21</div><div style="left:464.9px;top:-0.5px">192.168.1.156</div></div>
<div class="row m" style="top:607.7px;width:2339px;color:#24383f;"><div style="left:48.5px;top:-0.5px">2058</div><div style="left:98.5px;top:-0.5px">256.535056660</div><div style="left:244.8px;top:-0.5px">192.168.1.156</div><div style="left:464.9px;top:-0.5px">192.168.1.21</div></div>
<div class="row m" style="top:630.2px;width:2339px;color:#24383f;"><div style="left:48.5px;top:-0.5px">2059</div><div style="left:98.5px;top:-0.5px">256.547963557</div><div style="left:244.8px;top:-0.5px">192.168.1.21</div><div style="left:464.9px;top:-0.5px">192.168.1.156</div></div>
<div class="row m" style="top:652.7px;width:2339px;color:#24383f;"><div style="left:48.5px;top:-0.5px">2060</div><div style="left:98.5px;top:-0.5px">256.548990831</div><div style="left:244.8px;top:-0.5px">192.168.1.156</div><div style="left:464.9px;top:-0.5px">192.168.1.21</div></div>
<div class="row m" style="top:675.2px;width:2339px;color:#24383f;"><div style="left:48.5px;top:-0.5px">2061</div><div style="left:98.5px;top:-0.5px">256.561718060</div><div style="left:244.8px;top:-0.5px">192.168.1.21</div><div style="left:464.9px;top:-0.5px">192.168.1.156</div></div>
<div class="row m" style="top:697.7px;width:2339px;background:#3584e4;color:#ffffff;"><div style="left:48.5px;top:-0.5px">2062</div><div style="left:98.5px;top:-0.5px">256.562395400</div><div style="left:244.8px;top:-0.5px">192.168.1.156</div><div style="left:464.9px;top:-0.5px">192.168.1.21</div></div>
<div class="row m" style="top:720.2px;width:2339px;color:#24383f;"><div style="left:48.5px;top:-0.5px">2063</div><div style="left:98.5px;top:-0.5px">256.575587536</div><div style="left:244.8px;top:-0.5px">192.168.1.21</div><div style="left:464.9px;top:-0.5px">192.168.1.156</div></div>
<div class="row m" style="top:742.7px;width:2339px;color:#24383f;"><div style="left:48.5px;top:-0.5px">2064</div><div style="left:98.5px;top:-0.5px">256.576659943</div><div style="left:244.8px;top:-0.5px">192.168.1.156</div><div style="left:464.9px;top:-0.5px">192.168.1.21</div></div>
<div class="row m" style="top:765.2px;width:2339px;color:#24383f;"><div style="left:48.5px;top:-0.5px">2065</div><div style="left:98.5px;top:-0.5px">256.580303426</div><div style="left:244.8px;top:-0.5px">192.168.1.21</div><div style="left:464.9px;top:-0.5px">192.168.1.156</div></div>
<div style="left:11px;top:0;width:2px;height:776px;background:#a0a0ac;"></div>
<div style="left:11px;top:697.7px;width:2px;height:22.5px;background:#c3d9f6;"></div>
<svg style="left:2px;top:682px" width="22" height="12" viewBox="0 0 22 12"><path d="M1.5 5.2L6.4 8.8L20.7 0.8" stroke="#83838d" stroke-width="1.2" fill="none"/></svg>
</div>
<div style="left:0;top:946px;width:2342px;height:1.5px;background:#c4c2bf;"></div>
<div style="left:0;top:147px;width:1px;height:800px;background:#b5b4b2;"></div>
<div style="left:2340px;top:147px;width:1.2px;height:800px;background:#bfbebc;"></div>
<div style="left:2341.2px;top:147px;width:40.2px;height:799px;background:#e7e6ff;"></div>
<div style="left:2341.2px;top:199.7px;width:40.2px;height:1.6px;background:#3584e4;"></div>
<div style="left:2381.4px;top:147px;width:2.2px;height:800px;background:#c4c3c1;"></div>
<div style="left:2383.6px;top:147px;width:14.6px;height:799px;background:#efefed;"></div>
<div style="left:2383.6px;top:147.3px;width:14.6px;height:16.4px;background:#fefefe;border-bottom:1px solid #d6d5d3;"></div>
<svg style="left:2386.5px;top:152.3px" width="8" height="4" viewBox="0 0 8 4"><path d="M0 4H8L4 0Z" fill="#bcbcbc"/></svg>
<div style="left:2383.6px;top:175px;width:14.6px;height:31.5px;background:#ffffff;border-top:1px solid #d6d5d3;border-bottom:1px solid #d6d5d3;"></div>
<div style="left:2383.6px;top:929.5px;width:14.6px;height:16.5px;background:#fefefe;border-top:1px solid #d6d5d3;"></div>
<svg style="left:2386.5px;top:936px" width="8" height="4" viewBox="0 0 8 4"><path d="M0 0H8L4 4Z" fill="#bcbcbc"/></svg>
<div style="left:2398.2px;top:145.3px;width:1.8px;height:802px;background:#c2c1bf;"></div>
<div style="left:0;top:145.3px;width:2400px;height:2px;background:#c3c2c0;"></div>
<div style="left:2340px;top:946px;width:60px;height:1.5px;background:#c4c2bf;"></div>
<div style="left:0;top:951px;width:1388.5px;height:371px;background:#fbfaf9;border:1.5px solid #cfcdca;overflow:hidden;">
<div class="row m" style="top:0.6px;width:1388px;color:#1f2426;"><div style="left:26px;top:-0.5px">Frame 2062: 70 bytes on wire (560 bits), 70 bytes captured (560 bits)</div></div>
<svg style="left:8.5px;top:7.6px" width="6" height="9" viewBox="0 0 6 9"><path d="M0.5 0.5L5 4.5L0.5 8.5Z" fill="#c2c2c0"/></svg>
<div class="row m" style="top:23.1px;width:1388px;color:#1f2426;"><div style="left:26px;top:-0.5px">Ethernet II, Src: ActionsMicro_2f:60:fe (d0:c0:bf:2f:60:fe)</div></div>
<svg style="left:8.5px;top:30.1px" width="6" height="9" viewBox="0 0 6 9"><path d="M0.5 0.5L5 4.5L0.5 8.5Z" fill="#c2c2c0"/></svg>
<div class="row m" style="top:45.6px;width:1388px;color:#1f2426;"><div style="left:26px;top:-0.5px">Internet Protocol Version 4, Src: 192.168.1.156, Dst: 192.168.1.21</div></div>
<svg style="left:8.5px;top:52.6px" width="6" height="9" viewBox="0 0 6 9"><path d="M0.5 0.5L5 4.5L0.5 8.5Z" fill="#c2c2c0"/></svg>
<div class="row m" style="top:68.1px;width:1388px;color:#1f2426;"><div style="left:26px;top:-0.5px">Transmission Control Protocol, Src Port: 54984, Dst Port</div></div>
<svg style="left:8.5px;top:75.1px" width="6" height="9" viewBox="0 0 6 9"><path d="M0.5 0.5L5 4.5L0.5 8.5Z" fill="#c2c2c0"/></svg>
<div class="row m" style="top:90.6px;width:1388px;color:#1f2426;"><div style="left:26px;top:-0.5px">Data (16 bytes)</div></div>
<svg style="left:7px;top:99.6px" width="9" height="6" viewBox="0 0 9 6"><path d="M0.5 0.5H8.5L4.5 5Z" fill="#b6b6b4"/></svg>
<div class="row m" style="top:113.1px;width:1388px;background:#3584e4;color:#fff;"><div style="left:48.5px;top:-0.5px">Data: 55aa01c7020000000000000014004700</div></div>
<div class="row m" style="top:135.6px;width:1388px;color:#1f2426;"><div style="left:51px;top:-0.5px">[Length: 16]</div></div>
</div>
<div style="left:1393px;top:951px;width:1007px;height:371px;background:#fbfaf9;border:1.5px solid #cfcdca;overflow:hidden;">
<div class="m hx" style="left:0;top:0.1px;height:21.4px;line-height:21.4px;width:1000px;color:#1f2426;">
<div style="left:430.0px;top:0">fe 08 00 45 00</div><div style="left:607.0px;top:0"><span class="d">········</span> <span class="d">·</span>/`<span class="d">···</span>E<span class="d">·</span></div>
</div>
<div class="m hx" style="left:0;top:21.5px;height:21.4px;line-height:21.4px;width:1000px;color:#1f2426;">
<div style="left:430.0px;top:0">a8 01 9c c0 a8</div><div style="left:607.0px;top:0"><span class="d">·</span>8}<span class="d">·</span>@<span class="d">·</span>@<span class="d">·</span> 8<span class="d">·······</span></div>
</div>
<div class="m hx" style="left:0;top:42.9px;height:21.4px;line-height:21.4px;width:1000px;color:#1f2426;">
<div style="left:430.0px;top:0">6e 51 04 50 18</div><div style="left:607.0px;top:0"><span class="d">······</span>hu sm<span class="d">·</span>nQ<span class="d">·</span>P<span class="d">·</span></div>
</div>
<div class="m hx" style="left:0;top:64.29999999999998px;height:21.4px;line-height:21.4px;width:1000px;color:#1f2426;">
<div style="left:0;top:0;width:577.5px;height:21.9px;background:#3584e4;margin-top:0"></div>
<div style="left:670.0px;top:0;width:116.5px;height:21.9px;background:#3584e4;margin-top:0"></div>
<div style="left:430.0px;top:0;color:#fff">00 00 00 00 00</div>
<div style="left:607.0px;top:0"><span class="d">·</span>V<span class="d">·</span>,<span class="d">··</span><span style="color:#fff">U· ········</span></div>
</div>
<div class="m hx" style="left:0;top:85.69999999999999px;height:21.4px;line-height:21.4px;width:1000px;color:#1f2426;">
<div style="left:606.5px;top:0;width:63.5px;height:21.4px;background:#3584e4;margin-top:0"></div>
<div style="left:607.0px;top:0;color:#fff">····G·</div>
</div>
</div>
<div style="left:0;top:1322px;width:2400px;height:28px;background:#faf9f8;"></div>
<div style="left:12.2px;top:1327.2px;width:17.8px;height:17.8px;border-radius:9px;background:radial-gradient(circle at 45% 40%,#e9ea7c,#dcdd62);border:1.6px solid #8b8c48;"></div>
<svg style="left:40px;top:1326.3px" width="19" height="19.5" viewBox="0 0 19 19" preserveAspectRatio="none">
<rect x="1" y="1.5" width="13.5" height="16" fill="#f4f4f2" stroke="#c9c9c7" stroke-width="0.9"/>
<rect x="1.5" y="2" width="12.5" height="4.5" fill="#3a9ae0"/>
<path d="M3.5,4.2 h2 M4.5,3.2 v2" stroke="#fff" stroke-width="0.9"/>
<rect x="3.5" y="8.5" width="6" height="1" fill="#bdbdbb"/><rect x="3.5" y="11" width="5" height="1" fill="#bdbdbb"/><rect x="3.5" y="13.5" width="7" height="1" fill="#bdbdbb"/>
<path d="M16.5,1.5 L18.2,3.2 L9.5,12.5 L7,13.5 L7.8,10.8 Z" fill="#3b3b3b"/>
</svg>
<div class="t" style="left:77.5px;top:1322.0px;height:30px;line-height:30px;font-family:'Liberation Sans', 'DejaVu Sans', sans-serif;font-size:16.5px;font-weight:normal;font-style:normal;letter-spacing:0.162px;color:#24292b;">Data (data.data), 16 bytes</div>
<div class="t" style="left:1586.4px;top:1322.0px;height:30px;line-height:30px;font-family:'Liberation Sans', 'DejaVu Sans', sans-serif;font-size:16.5px;font-weight:normal;font-style:normal;letter-spacing:0.173px;color:#24292b;">Packets: 17160 · Displayed: 14415 (84.0%) · Dropped: 0 (0.0%)</div>
<div class="t" style="left:2276.5px;top:1322.0px;height:30px;line-height:30px;font-family:'Liberation Sans', 'DejaVu Sans', sans-serif;font-size:16.5px;font-weight:normal;font-style:normal;letter-spacing:0.536px;color:#24292b;">Profile: Default</div>
<div style="left:1570.5px;top:1327px;width:0;height:20px;border-left:1.5px dotted #c3c1be;"></div>
<div style="left:2261px;top:1327px;width:0;height:20px;border-left:1.5px dotted #c3c1be;"></div>
<div style="left:538.5px;top:167.5px;width:1280px;height:1042px;border-radius:11px 11px 0 0;background:#faf9f8;box-shadow:0 0 0 1px rgba(0,0,0,0.55),0 3px 12px 2px rgba(0,0,0,0.38);overflow:hidden;">
<div style="left:0;top:0;width:1280px;height:47px;background:#2a2a2a;border-bottom:1px solid #1c1c1c;"></div>
</div>
<div class="t" style="left:917px;top:176.0px;height:30px;line-height:30px;font-family:'Liberation Sans', 'DejaVu Sans', sans-serif;font-size:16.5px;font-weight:bold;font-style:normal;letter-spacing:0.145px;color:#ffffff;-webkit-text-stroke:0;">Wireshark · Follow TCP Stream (tcp.stream eq 7) · enp0s20f0u4u4</div>
<div style="left:1706px;top:193.3px;width:10.4px;height:3.3px;background:#f2f2f2;"></div>
<div style="left:1748.5px;top:185.9px;width:10.6px;height:10.5px;border:2.8px solid #f2f2f2;"></div>
<svg style="left:1790.2px;top:185.2px" width="13" height="13" viewBox="0 0 13 13"><path d="M1.7 1.7L10.6 10.6M10.6 1.7L1.7 10.6" stroke="#f2f2f2" stroke-width="2.6" fill="none"/></svg>
<div style="left:551px;top:228px;width:1254.7px;height:834.5px;background:#fbfaf9;border:1.5px solid #d0cecb;overflow:hidden;">
<div class="m" style="left:5.2999999999999545px;top:4.199999999999989px;height:22.5px;line-height:22.5px;width:315.0px;background:#fbeded;color:#962828;"><span style="position:relative;top:1.6px;left:1px">55aa0180000000000000<span class="ff">ffff</span>00000100</span></div>
<div class="m" style="left:5.2999999999999545px;top:26.69999999999999px;height:22.5px;line-height:22.5px;width:210.0px;background:#ededfb;color:#2c2c96;"><span style="position:relative;top:1.6px;left:1px">aa550101000000000000</span></div>
<div class="m" style="left:5.2999999999999545px;top:49.19999999999999px;height:22.5px;line-height:22.5px;width:336.0px;background:#fbeded;color:#962828;"><span style="position:relative;top:1.6px;left:1px">55aa0113000000000000000030000200</span></div>
<div class="m" style="left:5.2999999999999545px;top:71.69999999999999px;height:22.5px;line-height:22.5px;width:1218.0px;background:#ededfb;color:#2c2c96;"><span style="position:relative;top:1.6px;left:1px">aa55010100000000000055aa0201300036030102ef0400000201010201010110e8030000e8030000e8030000e8030000a0860100020102010000</span></div>
<div class="m" style="left:5.2999999999999545px;top:94.19999999999999px;height:22.5px;line-height:22.5px;width:84.0px;background:#ededfb;color:#2c2c96;"><span style="position:relative;top:1.6px;left:1px">00000100</span></div>
<div class="m" style="left:5.2999999999999545px;top:116.69999999999999px;height:22.5px;line-height:22.5px;width:336.0px;background:#fbeded;color:#962828;"><span style="position:relative;top:1.6px;left:1px">55aa0113000000000000000030000300</span></div>
<div class="m" style="left:5.2999999999999545px;top:139.2px;height:22.5px;line-height:22.5px;width:1218.0px;background:#ededfb;color:#2c2c96;"><span style="position:relative;top:1.6px;left:1px">aa55010100000000000055aa0201300036030102ef0400000201010201010110e8030000e8030000e8030000e8030000a0860100020102010000</span></div>
<div class="m" style="left:5.2999999999999545px;top:161.7px;height:22.5px;line-height:22.5px;width:84.0px;background:#ededfb;color:#2c2c96;"><span style="position:relative;top:1.6px;left:1px">00000100</span></div>
<div class="m" style="left:5.2999999999999545px;top:184.2px;height:22.5px;line-height:22.5px;width:315.0px;background:#fbeded;color:#962828;"><span style="position:relative;top:1.6px;left:1px">55aa0181000000000000<span class="ff">ffff</span>00000400</span></div>
<div class="m" style="left:5.2999999999999545px;top:206.7px;height:22.5px;line-height:22.5px;width:210.0px;background:#ededfb;color:#2c2c96;"><span style="position:relative;top:1.6px;left:1px">aa550101000000000000</span></div>
<div class="m" style="left:5.2999999999999545px;top:229.2px;height:22.5px;line-height:22.5px;width:315.0px;background:#fbeded;color:#962828;"><span style="position:relative;top:1.6px;left:1px">55aa01b4080000000000<span class="ff">ffff</span>00000500</span></div>
<div class="m" style="left:5.2999999999999545px;top:251.7px;height:22.5px;line-height:22.5px;width:210.0px;background:#ededfb;color:#2c2c96;"><span style="position:relative;top:1.6px;left:1px">aa550101d70d00000000</span></div>
<div class="m" style="left:5.2999999999999545px;top:274.2px;height:22.5px;line-height:22.5px;width:336.0px;background:#fbeded;color:#962828;"><span style="position:relative;top:1.6px;left:1px">55aa01a400000000d70d000000040600</span></div>
<div class="m" style="left:5.2999999999999545px;top:296.7px;height:22.5px;line-height:22.5px;width:1218.0px;background:#ededfb;color:#2c2c96;"><span style="position:relative;top:1.6px;left:1px">aa55010100000000000055aa10a30b1d02000000e577ced210230b1802000000e5770f1210e30b0402000000e577d34c10230b0305000000e577</span></div>
<div class="m" style="left:5.2999999999999545px;top:319.2px;height:22.5px;line-height:22.5px;width:1218.0px;background:#ededfb;color:#2c2c96;"><span style="position:relative;top:1.6px;left:1px">134910230b0704000000e577134910230b0a03000000e577134910230b0e03000000e577134d10630b0d03000000e577931d10630b1405000000</span></div>
<div class="m" style="left:5.2999999999999545px;top:341.7px;height:22.5px;line-height:22.5px;width:1218.0px;background:#ededfb;color:#2c2c96;"><span style="position:relative;top:1.6px;left:1px">e577931d10630b2702000000e577932110630b2d04000000e577932110630b1802000000e577b36d10a30b0a03000000e577b37110a30b3b0500</span></div>
<div class="m" style="left:5.2999999999999545px;top:364.2px;height:22.5px;line-height:22.5px;width:1218.0px;background:#ededfb;color:#2c2c96;"><span style="position:relative;top:1.6px;left:1px">0000e577b37110a30b3804000000e577b37510e30b2c04000000e577932e10e30b3305000000e577932e10e30b0303000000e577937a10e30b0e</span></div>
<div class="m" style="left:5.2999999999999545px;top:386.7px;height:22.5px;line-height:22.5px;width:1218.0px;background:#ededfb;color:#2c2c96;"><span style="position:relative;top:1.6px;left:1px">02000000e577937a10230b2e02000000e577d4e810230b2603000000e577d4ec10230b2605000000e577f40010230b3504000000e577f4001063</span></div>
<div class="m" style="left:5.2999999999999545px;top:409.2px;height:22.5px;line-height:22.5px;width:1218.0px;background:#ededfb;color:#2c2c96;"><span style="position:relative;top:1.6px;left:1px">0b0704000000e577949d10630b0c05000000e577949d10a30b1904000000e577b47d10a30b1d05000000e577b47d10a30b0403000000e577b481</span></div>
<div class="m" style="left:5.2999999999999545px;top:431.7px;height:22.5px;line-height:22.5px;width:1218.0px;background:#ededfb;color:#2c2c96;"><span style="position:relative;top:1.6px;left:1px">10a30b0702000000e577b48110e30b0a03000000e57734de10e30b1705000000e57734de10e30b0d04000000e57734e610e30b2b02000000e577</span></div>
<div class="m" style="left:5.2999999999999545px;top:454.2px;height:22.5px;line-height:22.5px;width:1218.0px;background:#ededfb;color:#2c2c96;"><span style="position:relative;top:1.6px;left:1px">34e610230b0d02000000e577d5ec10230b1903000000e577d5ec10230b2d05000000e577d5ec10230b1904000000e577f50010630b2803000000</span></div>
<div class="m" style="left:5.2999999999999545px;top:476.7px;height:22.5px;line-height:22.5px;width:1218.0px;background:#ededfb;color:#2c2c96;"><span style="position:relative;top:1.6px;left:1px">e577954110630b2d04000000e577954110630b2f05000000e577954110230b2303000000e577b57110230b3704000000e577b57110230b380500</span></div>
<div class="m" style="left:5.2999999999999545px;top:499.2px;height:22.5px;line-height:22.5px;width:1218.0px;background:#ededfb;color:#2c2c96;"><span style="position:relative;top:1.6px;left:1px">0000e577b57110230b3b02000000e577b57110230b1804000000e577355610e30b2802000000e577355610e30b0203000000e577553610e30b07</span></div>
<div class="m" style="left:5.2999999999999545px;top:521.7px;height:22.5px;line-height:22.5px;width:1218.0px;background:#ededfb;color:#2c2c96;"><span style="position:relative;top:1.6px;left:1px">05000000e577553610230b3803000000e577d6ec10230b0805000000e577f60010230b2504000000e577f60010230b2102000000e577f6041063</span></div>
<div class="m" style="left:5.2999999999999545px;top:544.2px;height:22.5px;line-height:22.5px;width:1218.0px;background:#ededfb;color:#2c2c96;"><span style="position:relative;top:1.6px;left:1px">0b1404000000e577963510630b2b05000000e577963510630b0503000000e577963910a30b0902000000e577b66d10a30b0a05000000e577b66d</span></div>
<div class="m" style="left:5.2999999999999545px;top:566.7px;height:22.5px;line-height:22.5px;width:1218.0px;background:#ededfb;color:#2c2c96;"><span style="position:relative;top:1.6px;left:1px">10a30b1103000000e577b67110a30b1e04000000e577b67510e30b0904000000e577368210e30b3a05000000e577368210e30b0b03000000e577</span></div>
<div class="m" style="left:5.2999999999999545px;top:589.2px;height:22.5px;line-height:22.5px;width:1218.0px;background:#ededfb;color:#2c2c96;"><span style="position:relative;top:1.6px;left:1px">368610e30b1802000000e57736c210230b2a05000000e577f70010230b3b02000000e577f70010230b0204000000e577f70410230b0c03000000</span></div>
<div class="m" style="left:5.2999999999999545px;top:611.7px;height:22.5px;line-height:22.5px;width:1218.0px;background:#ededfb;color:#2c2c96;"><span style="position:relative;top:1.6px;left:1px">e577f70410e30b0405000000e577f7d510e30b0004000000e577170210e30b0503000000e577170210230b2902000000e577fadc10230b350500</span></div>
<div class="m" style="left:5.2999999999999545px;top:634.2px;height:22.5px;line-height:22.5px;width:1218.0px;background:#ededfb;color:#2c2c96;"><span style="position:relative;top:1.6px;left:1px">0000e577fae010230b0304000000e577fae410630b2d04000000e5779ab110630b2802000000e5779ac510a30b3904000000e577bae510e30b00</span></div>
<div class="m" style="left:5.2999999999999545px;top:656.7px;height:22.5px;line-height:22.5px;width:1218.0px;background:#ededfb;color:#2c2c96;"><span style="position:relative;top:1.6px;left:1px">04000000e5773ac610e30b0605000000e5773aca10e30b2202000000e577fbe810230b0505000000e577fbec10230b1904000000e5771b011063</span></div>
<div class="m" style="left:5.2999999999999545px;top:679.2px;height:22.5px;line-height:22.5px;width:1092.0px;background:#ededfb;color:#2c2c96;"><span style="position:relative;top:1.6px;left:1px">0b1802000000e5779b7910630b1f04000000e5779b7910a30b3204000000e577bb7110a30b0802000000e577bb7510e30b130000</span></div>
<div class="m" style="left:5.2999999999999545px;top:701.7px;height:22.5px;line-height:22.5px;width:336.0px;background:#fbeded;color:#962828;"><span style="position:relative;top:1.6px;left:1px">55aa01a4000000000000010000040700</span></div>
<div class="m" style="left:5.2999999999999545px;top:724.2px;height:22.5px;line-height:22.5px;width:1218.0px;background:#ededfb;color:#2c2c96;"><span style="position:relative;top:1.6px;left:1px">aa55010100000000000055aa02000000e5773bc210e30b0704000000e5773bc610e30b2a05000000e5773bce10230b3704000000e577fce41023</span></div>
<div class="m" style="left:5.2999999999999545px;top:746.7px;height:22.5px;line-height:22.5px;width:1218.0px;background:#ededfb;color:#2c2c96;"><span style="position:relative;top:1.6px;left:1px">0b1405000000e577fcec10230b0002000000e5771c0d10630b2002000000e5779ccd10630b2605000000e5779ccd10630b2704000000e5779ccd</span></div>
<div class="m" style="left:5.2999999999999545px;top:769.2px;height:22.5px;line-height:22.5px;width:1218.0px;background:#ededfb;color:#2c2c96;"><span style="position:relative;top:1.6px;left:1px">10a30b1404000000e577dc0d10a30b3302000000e577dc1910e30b2204000000e5773c8210230b2a02000000e577fdc810230b2a05000000e577</span></div>
<div class="m" style="left:5.2999999999999545px;top:791.7px;height:22.5px;line-height:22.5px;width:1218.0px;background:#ededfb;color:#2c2c96;"><span style="position:relative;top:1.6px;left:1px">fde810230b3604000000e577fde810630b3904000000e5777ddd10a30b3504000000e577bd7910e30b0005000000e577ddc510e30b1004000000</span></div>
<div class="m" style="left:5.2999999999999545px;top:814.2px;height:22.5px;line-height:22.5px;width:1218.0px;background:#ededfb;color:#2c2c96;"><span style="position:relative;top:1.6px;left:1px">e5777d5210230b0705000000e577feec10230b1104000000e577feec10630b0b05000000e5779e5510630b0c02000000e5779e5510630b170400</span></div>
<div style="left:1236px;top:0;width:1.2px;height:832px;background:#d6d4d1;"></div>
<div style="left:1237.2px;top:0;width:15px;height:832px;background:#efefed;"></div>
<div style="left:1237.2px;top:0;width:15px;height:16px;background:#fefefe;border-bottom:1px solid #d8d7d5;"></div>
<svg style="left:1240.3px;top:4.5px" width="8" height="4.5" viewBox="0 0 8 4.5"><path d="M0 4.5H8L4 0Z" fill="#5a5a5a"/></svg>
<div style="left:1237.2px;top:16px;width:15px;height:30px;background:#ffffff;border-bottom:1px solid #dddcda;"></div>
<div style="left:1237.2px;top:815px;width:15px;height:17px;background:#fefefe;border-top:1px solid #d8d7d5;"></div>
<svg style="left:1240.3px;top:821.5px" width="8" height="4.5" viewBox="0 0 8 4.5"><path d="M0 0H8L4 4.5Z" fill="#5a5a5a"/></svg>
</div>
<div class="t" style="left:551.7px;top:1063.2px;height:30px;line-height:30px;font-family:'Liberation Sans', 'DejaVu Sans', sans-serif;font-size:13.5px;font-weight:normal;font-style:italic;letter-spacing:-0.097px;color:#2e3436;">7,138 <span style="color:#7f0000;background:#fbeded;padding:1.5px 0">client</span> pkts, 7,138 <span style="color:#00007f;background:#ededfb;padding:1.5px 0">server</span> pkts, 14,275 turns.</div>
<div class="btn" style="left:551.4px;top:1092.7px;width:419.30000000000007px;height:30.59999999999991px;"></div>
<div class="t" style="left:557.7px;top:1093.6px;height:30px;line-height:30px;font-family:'Liberation Sans', 'DejaVu Sans', sans-serif;font-size:16.5px;font-weight:normal;font-style:normal;letter-spacing:0.350px;color:#24292b;">Entire conversation (497 kB)</div>
<svg style="left:952.7px;top:1106.5px" width="8" height="4" viewBox="0 0 8 4"><path d="M0 0H8L4 4Z" fill="#4f4f4f"/></svg>
<div class="t" style="left:1027.3px;top:1093.0px;height:30px;line-height:30px;font-family:'Liberation Sans', 'DejaVu Sans', sans-serif;font-size:16.5px;font-weight:normal;font-style:normal;letter-spacing:0.143px;color:#24292b;">Show data as</div>
<div class="btn" style="left:1136.7px;top:1092.7px;width:244.29999999999995px;height:30.59999999999991px;"></div>
<div class="t" style="left:1143px;top:1093.6px;height:30px;line-height:30px;font-family:'Liberation Sans', 'DejaVu Sans', sans-serif;font-size:16.5px;font-weight:normal;font-style:normal;letter-spacing:-0.005px;color:#24292b;">Raw</div>
<svg style="left:1363px;top:1106.5px" width="8" height="4" viewBox="0 0 8 4"><path d="M0 0H8L4 4Z" fill="#4f4f4f"/></svg>
<div class="t" style="left:1676.4px;top:1093.0px;height:30px;line-height:30px;font-family:'Liberation Sans', 'DejaVu Sans', sans-serif;font-size:16.5px;font-weight:normal;font-style:normal;letter-spacing:0.235px;color:#24292b;">Stream</div>
<div style="left:1739px;top:1095.5px;width:67px;height:25.5px;border:1px solid #cdc7c2;border-radius:4px;background:#f4f3f2;"></div>
<div style="left:1789px;top:1096px;width:1px;height:24.5px;background:#d5d3d0;"></div>
<div class="t" style="left:1745px;top:1093.0px;height:30px;line-height:30px;font-family:'Liberation Sans', 'DejaVu Sans', sans-serif;font-size:16.5px;font-weight:normal;font-style:normal;letter-spacing:0.000px;color:#24292b;">7</div>
<svg style="left:1792.8px;top:1101.3px" width="8.4" height="4" viewBox="0 0 8 4"><path d="M0 4H8L4 0Z" fill="#4f4f4f"/></svg>
<svg style="left:1792.8px;top:1110.7px" width="8.4" height="4" viewBox="0 0 8 4"><path d="M0 0H8L4 4Z" fill="#4f4f4f"/></svg>
<div class="t" style="left:551.7px;top:1131.0px;height:30px;line-height:30px;font-family:'Liberation Sans', 'DejaVu Sans', sans-serif;font-size:16.5px;font-weight:normal;font-style:normal;letter-spacing:0.182px;color:#24292b;">Find:</div>
<div style="left:596.7px;top:1130px;width:1102.5px;height:30.5px;border:1px solid #cdc7c2;border-radius:4px;background:#f5f4f3;"></div>
<div class="btn" style="left:1706.4px;top:1130.4px;width:99.3px;height:29.3px;border:1.5px solid #5b9be5;background:linear-gradient(#fefefe,#e7edf6);"></div>
<div class="t" style="left:1718.8px;top:1130.0px;height:30px;line-height:30px;font-family:'Liberation Sans', 'DejaVu Sans', sans-serif;font-size:16.5px;font-weight:normal;font-style:normal;letter-spacing:0.377px;color:#24292b;">Find <span class="u">N</span>ext</div>
<div class="btn" style="left:551.4000000000001px;top:1167.8px;width:99.4px;height:29.4px;"></div>
<div class="t" style="left:591px;top:1167.0px;height:30px;line-height:30px;font-family:'Liberation Sans', 'DejaVu Sans', sans-serif;font-size:16.5px;font-weight:normal;font-style:normal;letter-spacing:0.691px;color:#24292b;">Help</div>
<svg style="left:569.3px;top:1171.8px" width="19.6" height="19.6" viewBox="0 0 20 20">
<rect x="1.2" y="1.2" width="17.6" height="17.6" rx="4" fill="#ececec" stroke="#d2d2d2" stroke-width="1"/>
<g fill="none" stroke="#ee4b4b" stroke-width="1.3"><path d="M1.5 6 A4.5 4.5 0 0 1 6 1.5 M14 1.5 A4.5 4.5 0 0 1 18.5 6 M18.5 14 A4.5 4.5 0 0 1 14 18.5 M6 18.5 A4.5 4.5 0 0 1 1.5 14"/></g>
<g fill="#ef4444"><path d="M5.3 2.6 L8.2 5.5 L5.5 8.2 L2.6 5.3Z"/><path d="M14.7 2.6 L17.4 5.3 L14.5 8.2 L11.8 5.5Z"/><path d="M5.3 17.4 L2.6 14.7 L5.5 11.8 L8.2 14.5Z"/><path d="M14.7 17.4 L11.8 14.5 L14.5 11.8 L17.4 14.7Z"/></g>
<circle cx="10" cy="10" r="3.2" fill="#fafafa"/>
</svg>
<div class="btn" style="left:1169.7px;top:1167.8px;width:202.9px;height:29.4px;"></div>
<div class="t" style="left:1186.7px;top:1167.0px;height:30px;line-height:30px;font-family:'Liberation Sans', 'DejaVu Sans', sans-serif;font-size:16.5px;font-weight:normal;font-style:normal;letter-spacing:0.406px;color:#24292b;">Filter Out This Stream</div>
<div class="btn" style="left:1380.1000000000001px;top:1167.8px;width:99.4px;height:29.4px;"></div>
<div class="t" style="left:1411px;top:1167.0px;height:30px;line-height:30px;font-family:'Liberation Sans', 'DejaVu Sans', sans-serif;font-size:16.5px;font-weight:normal;font-style:normal;letter-spacing:0.613px;color:#24292b;">Print</div>
<div class="btn" style="left:1486.2px;top:1167.8px;width:107.4px;height:29.4px;"></div>
<div class="t" style="left:1502.5px;top:1167.0px;height:30px;line-height:30px;font-family:'Liberation Sans', 'DejaVu Sans', sans-serif;font-size:16.5px;font-weight:normal;font-style:normal;letter-spacing:-0.328px;color:#24292b;">Save as…</div>
<div class="btn" style="left:1599.7px;top:1167.8px;width:99.99999999999991px;height:29.4px;"></div>
<div class="t" style="left:1631.8px;top:1167.0px;height:30px;line-height:30px;font-family:'Liberation Sans', 'DejaVu Sans', sans-serif;font-size:16.5px;font-weight:normal;font-style:normal;letter-spacing:-0.122px;color:#24292b;">Back</div>
<div class="btn" style="left:1706.4px;top:1167.8px;width:99.4px;height:29.4px;"></div>
<div class="t" style="left:1743.7px;top:1167.0px;height:30px;line-height:30px;font-family:'Liberation Sans', 'DejaVu Sans', sans-serif;font-size:16.5px;font-weight:normal;font-style:normal;letter-spacing:0.122px;color:#24292b;"><span class="u">C</span>lose</div>
<svg style="left:1724.2px;top:1174.6px" width="15" height="14" viewBox="0 0 15 14"><path d="M2 1.6L12.6 12.4" stroke="#24292b" stroke-width="3" fill="none"/><path d="M12.8 1.2L1.6 12.8" stroke="#24292b" stroke-width="1.7" fill="none"/></svg>
<svg style="left:1803px;top:1195px" width="14" height="14" viewBox="0 0 14 14"><g fill="#c9c7c4"><rect x="10" y="2" width="1.5" height="1.5"/><rect x="6" y="6" width="1.5" height="1.5"/><rect x="10" y="6" width="1.5" height="1.5"/><rect x="2" y="10" width="1.5" height="1.5"/><rect x="6" y="10" width="1.5" height="1.5"/><rect x="10" y="10" width="1.5" height="1.5"/></g></svg>
</body></html>
